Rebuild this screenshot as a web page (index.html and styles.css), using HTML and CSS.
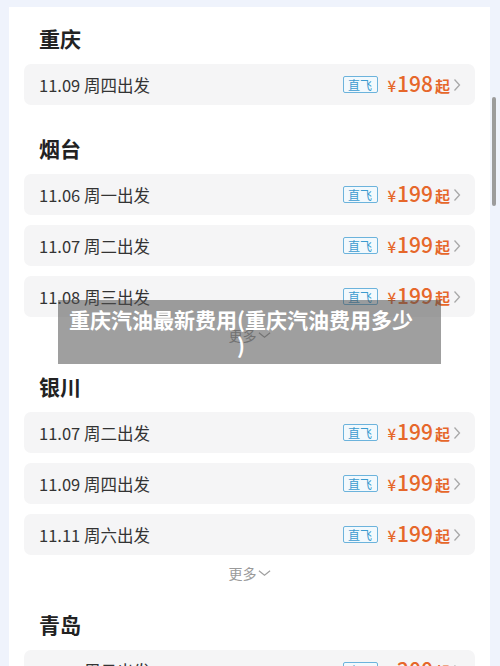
FILE: index.html
```html
<!DOCTYPE html>
<html lang="zh-CN">
<head>
<meta charset="utf-8">
<link rel="stylesheet" href="styles.css">
</head>
<body>
<div class="card">
  <section class="city">
    <h2 class="city-name">重庆</h2>
    <div class="rows">
      <div class="row"><span class="date">11.09 周四出发</span><span class="right"><span class="tag">直飞</span><span class="price"><span class="yen">¥</span>198<span class="qi">起</span></span><svg class="chev" viewBox="0 0 8 14"><path d="M1.5 1.5 L6.5 7 L1.5 12.5" /></svg></span></div>
    </div>
  </section>
  <section class="city">
    <h2 class="city-name">烟台</h2>
    <div class="rows">
      <div class="row"><span class="date">11.06 周一出发</span><span class="right"><span class="tag">直飞</span><span class="price"><span class="yen">¥</span>199<span class="qi">起</span></span><svg class="chev" viewBox="0 0 8 14"><path d="M1.5 1.5 L6.5 7 L1.5 12.5" /></svg></span></div>
      <div class="row"><span class="date">11.07 周二出发</span><span class="right"><span class="tag">直飞</span><span class="price"><span class="yen">¥</span>199<span class="qi">起</span></span><svg class="chev" viewBox="0 0 8 14"><path d="M1.5 1.5 L6.5 7 L1.5 12.5" /></svg></span></div>
      <div class="row"><span class="date">11.08 周三出发</span><span class="right"><span class="tag">直飞</span><span class="price"><span class="yen">¥</span>199<span class="qi">起</span></span><svg class="chev" viewBox="0 0 8 14"><path d="M1.5 1.5 L6.5 7 L1.5 12.5" /></svg></span></div>
    </div>
    <div class="more">更多<svg class="down" viewBox="0 0 14 8"><path d="M1 1.5 L7 6.5 L13 1.5" /></svg></div>
  </section>
  <section class="city">
    <h2 class="city-name">银川</h2>
    <div class="rows">
      <div class="row"><span class="date">11.07 周二出发</span><span class="right"><span class="tag">直飞</span><span class="price"><span class="yen">¥</span>199<span class="qi">起</span></span><svg class="chev" viewBox="0 0 8 14"><path d="M1.5 1.5 L6.5 7 L1.5 12.5" /></svg></span></div>
      <div class="row"><span class="date">11.09 周四出发</span><span class="right"><span class="tag">直飞</span><span class="price"><span class="yen">¥</span>199<span class="qi">起</span></span><svg class="chev" viewBox="0 0 8 14"><path d="M1.5 1.5 L6.5 7 L1.5 12.5" /></svg></span></div>
      <div class="row"><span class="date">11.11 周六出发</span><span class="right"><span class="tag">直飞</span><span class="price"><span class="yen">¥</span>199<span class="qi">起</span></span><svg class="chev" viewBox="0 0 8 14"><path d="M1.5 1.5 L6.5 7 L1.5 12.5" /></svg></span></div>
    </div>
    <div class="more">更多<svg class="down" viewBox="0 0 14 8"><path d="M1 1.5 L7 6.5 L13 1.5" /></svg></div>
  </section>
  <section class="city">
    <h2 class="city-name">青岛</h2>
    <div class="rows">
      <div class="row"><span class="date">11.05 周日出发</span><span class="right"><span class="tag">直飞</span><span class="price"><span class="yen">¥</span>200<span class="qi">起</span></span><svg class="chev" viewBox="0 0 8 14"><path d="M1.5 1.5 L6.5 7 L1.5 12.5" /></svg></span></div>
      <div class="row"><span class="date">11.07 周二出发</span><span class="right"><span class="tag">直飞</span><span class="price"><span class="yen">¥</span>200<span class="qi">起</span></span><svg class="chev" viewBox="0 0 8 14"><path d="M1.5 1.5 L6.5 7 L1.5 12.5" /></svg></span></div>
    </div>
  </section>
</div>
<div class="scrollbar"></div>
<div class="overlay">重庆汽油最新费用(重庆汽油费用多少)</div>
</body>
</html>
```
FILE: styles.css
```css
html, body {
  margin: 0;
  padding: 0;
  height: 666px;
  overflow: hidden;
}
body {
  background: #eff3fc;
  font-family: "Noto Sans CJK SC", "Noto Sans", sans-serif;
  color: #333;
}
.card {
  margin: 7px 10px 0 9px;
  background: #fff;
  padding: 17px 15px 0;
}
.city {
  margin-bottom: 29px;
}
.city-name {
  margin: 0 0 12px 15px;
  font-size: 21px;
  line-height: 28px;
  font-weight: 700;
  color: #222;
}
.rows {
  display: flex;
  flex-direction: column;
  gap: 10px;
}
.row {
  height: 41px;
  background: #f5f5f6;
  border-radius: 7px;
  display: flex;
  align-items: center;
  justify-content: space-between;
  padding: 0 14px 0 15px;
}
.date {
  font-size: 16.5px;
  color: #333;
}
.right {
  display: flex;
  align-items: center;
}
.tag {
  box-sizing: border-box;
  width: 35px;
  height: 17px;
  border: 1px solid #6cb3dc;
  border-radius: 2px;
  background: #f2f9fd;
  color: #3b9bcf;
  font-size: 12px;
  line-height: 15px;
  text-align: center;
  margin-right: 10px;
}
.price {
  color: #e6672a;
  font-size: 21px;
  font-weight: 500;
  line-height: 24px;
  display: flex;
  align-items: baseline;
}
.yen {
  font-size: 15px;
  margin-right: 1px;
}
.qi {
  font-size: 15px;
  font-weight: 700;
  margin-left: 2px;
}
.chev {
  width: 8px;
  height: 14px;
  margin-left: 3px;
  fill: none;
  stroke: #a8a8a8;
  stroke-width: 1.3;
}
.more {
  margin-top: 7px;
  height: 22px;
  display: flex;
  align-items: center;
  justify-content: center;
  font-size: 14px;
  color: #9a9a9a;
  margin-bottom: -3px;
}
.down {
  width: 13px;
  height: 8px;
  margin-left: 1px;
  fill: none;
  stroke: #a0a0a0;
  stroke-width: 1.3;
}
.scrollbar {
  position: absolute;
  left: 492px;
  top: 97px;
  width: 4px;
  height: 109px;
  border-radius: 2px;
  background: #9c9c9c;
}
.overlay {
  position: absolute;
  left: 58px;
  top: 300px;
  width: 383px;
  height: 64px;
  box-sizing: border-box;
  padding: 6px 27px 0 10px;
  background: rgba(80, 80, 80, 0.55);
  color: #fff;
  font-size: 21px;
  font-weight: 700;
  line-height: 26px;
  text-align: center;
  line-break: anywhere;
}
```
